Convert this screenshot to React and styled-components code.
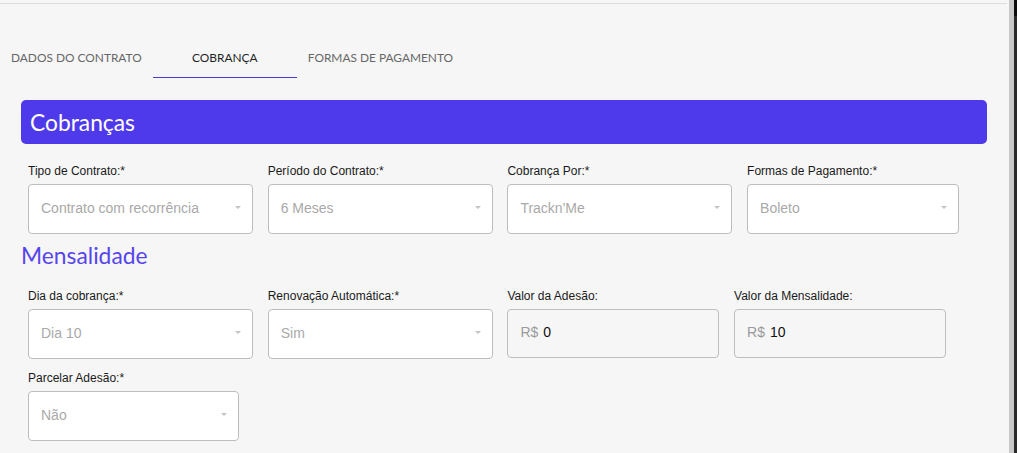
import React from "react";
import styled, { createGlobalStyle } from "styled-components";

const GlobalStyle = createGlobalStyle`
  html, body {
    margin: 0;
    padding: 0;
    background: #f6f6f6;
    overflow: hidden;
  }
  * {
    box-sizing: border-box;
  }
`;

const Page = styled.div`
  display: flex;
  width: 1017px;
  height: 453px;
  overflow: hidden;
`;

const Main = styled.div`
  flex: 1;
  padding-top: 3px;
  background: #f6f6f6;
`;

const ScrollTrack = styled.div`
  width: 5px;
  background: #c9c9c9;
`;

const Edge = styled.div`
  width: 3px;
  background: linear-gradient(#0c0c0c 0 16px, #2a2a2a 16px);
`;

const TopRule = styled.div`
  height: 1px;
  margin-right: 2px;
  background: #dcdcdc;
`;

const Tabs = styled.div`
  display: flex;
  margin-top: 34px;
  height: 40px;
`;

const Tab = styled.div`
  min-width: 144px;
  padding: 0 11px;
  display: flex;
  align-items: center;
  justify-content: center;
  font-family: "Lato", "Open Sans", sans-serif;
  font-size: 11.9px;
  color: ${(p) => (p.$active ? "#1f1f1f" : "#666")};
  border-bottom: 1px solid ${(p) => (p.$active ? "#4b3bd6" : "transparent")};
`;

const Content = styled.div`
  padding: 22px 22px 0 21px;
`;

const Banner = styled.div`
  height: 44px;
  display: flex;
  align-items: center;
  padding-left: 9px;
  background: #4f3aeb;
  border-radius: 5px;
  color: #fff;
  font-family: "Lato", "Open Sans", sans-serif;
  font-size: 22.8px;
`;

const Section = styled.div`
  padding-left: 7px;
`;

const Row = styled.div`
  display: flex;
  gap: 14.7px;
  margin-top: ${(p) => p.$top || 0}px;
`;

const Field = styled.div`
  width: ${(p) => p.$w}px;
  display: flex;
  flex-direction: column;
`;

const Label = styled.label`
  font-family: "Liberation Sans", Arial, sans-serif;
  font-size: 12px;
  line-height: 14px;
  color: #1a1a1a;
  margin-bottom: 6px;
`;

const SelectBox = styled.div`
  height: 50px;
  display: flex;
  align-items: center;
  justify-content: space-between;
  padding: 0 11px 3px 12px;
  background: #fff;
  border: 1px solid #bdbdbd;
  border-radius: 4px;
  font-family: "Liberation Sans", Arial, sans-serif;
  font-size: 14px;
  color: #a9a9a9;
`;

const Caret = styled.span`
  width: 0;
  height: 0;
  border-left: 3px solid transparent;
  border-right: 3px solid transparent;
  border-top: 3px solid #c4c4c4;
`;

const MoneyBox = styled.div`
  height: 49px;
  display: flex;
  align-items: center;
  gap: 5px;
  padding: 0 0 3px 12px;
  background: #f6f6f6;
  border: 1px solid #bdbdbd;
  border-radius: 4px;
  font-family: "Liberation Sans", Arial, sans-serif;
  font-size: 14px;
`;

const Prefix = styled.span`
  color: #9a9a9a;
`;

const Amount = styled.span`
  color: #111;
`;

const SubTitle = styled.div`
  margin: 8px 0 0 -7px;
  font-family: "Lato", "Open Sans", sans-serif;
  font-size: 22.8px;
  line-height: 26px;
  color: #5645ec;
`;

const Select = ({ label, value, w }) => (
  <Field $w={w}>
    <Label>{label}</Label>
    <SelectBox>
      <span>{value}</span>
      <Caret />
    </SelectBox>
  </Field>
);

const Money = ({ label, value, w }) => (
  <Field $w={w}>
    <Label>{label}</Label>
    <MoneyBox>
      <Prefix>R$</Prefix>
      <Amount>{value}</Amount>
    </MoneyBox>
  </Field>
);

const App = () => {
  return (
    <>
      <GlobalStyle />
      <Page>
        <Main>
          <TopRule />
          <Tabs>
            <Tab>DADOS DO CONTRATO</Tab>
            <Tab $active>COBRANÇA</Tab>
            <Tab>FORMAS DE PAGAMENTO</Tab>
          </Tabs>
          <Content>
            <Banner>Cobranças</Banner>
            <Section>
              <Row $top={20}>
                <Select label="Tipo de Contrato:*" value="Contrato com recorrência" w={225} />
                <Select label="Período do Contrato:*" value="6 Meses" w={225} />
                <Select label="Cobrança Por:*" value="Trackn'Me" w={225} />
                <Select label="Formas de Pagamento:*" value="Boleto" w={212} />
              </Row>
              <SubTitle>Mensalidade</SubTitle>
              <Row $top={21}>
                <Select label="Dia da cobrança:*" value="Dia 10" w={225} />
                <Select label="Renovação Automática:*" value="Sim" w={225} />
                <Money label="Valor da Adesão:" value="0" w={212} />
                <Money label="Valor da Mensalidade:" value="10" w={212} />
              </Row>
              <Row $top={12}>
                <Select label="Parcelar Adesão:*" value="Não" w={211} />
              </Row>
            </Section>
          </Content>
        </Main>
        <ScrollTrack />
        <Edge />
      </Page>
    </>
  );
};

export default App;
